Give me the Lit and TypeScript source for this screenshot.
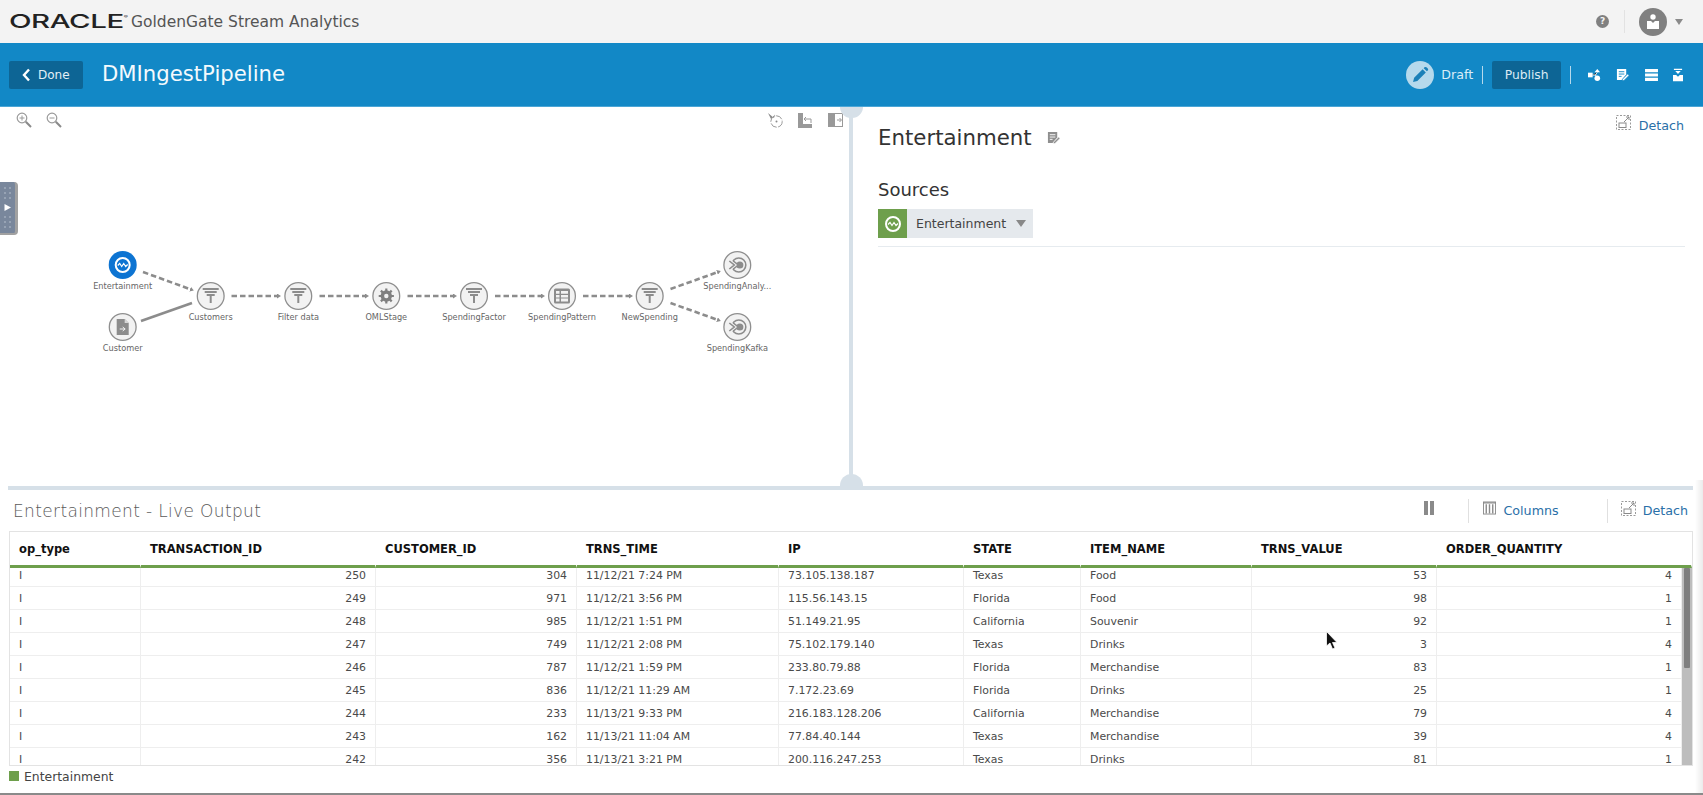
import { LitElement, html, css, svg } from "lit";
import { customElement } from "lit/decorators.js";

const COLS = ["op_type","TRANSACTION_ID","CUSTOMER_ID","TRNS_TIME","IP","STATE","ITEM_NAME","TRNS_VALUE","ORDER_QUANTITY"];
const NUMERIC = new Set([1,2,7,8]);
const ROWS = [
  ["I","250","304","11/12/21 7:24 PM","73.105.138.187","Texas","Food","53","4"],
  ["I","249","971","11/12/21 3:56 PM","115.56.143.15","Florida","Food","98","1"],
  ["I","248","985","11/12/21 1:51 PM","51.149.21.95","California","Souvenir","92","1"],
  ["I","247","749","11/12/21 2:08 PM","75.102.179.140","Texas","Drinks","3","4"],
  ["I","246","787","11/12/21 1:59 PM","233.80.79.88","Florida","Merchandise","83","1"],
  ["I","245","836","11/12/21 11:29 AM","7.172.23.69","Florida","Drinks","25","1"],
  ["I","244","233","11/13/21 9:33 PM","216.183.128.206","California","Merchandise","79","4"],
  ["I","243","162","11/13/21 11:04 AM","77.84.40.144","Texas","Merchandise","39","4"],
  ["I","242","356","11/13/21 3:21 PM","200.116.247.253","Texas","Drinks","81","1"],
];

const funnel = svg`<path d="M-8-7H8M-6-4H6M-4-1H4" stroke="#8c8c8c" stroke-width="1.8" fill="none"/><path d="M-1-1H1V7H-1Z" fill="#8c8c8c"/>`;
const gear = svg`<circle r="4.2" fill="none" stroke="#808080" stroke-width="3"/><path d="M0-7.6V7.6M-7.6 0H7.6M-5.4-5.4 5.4 5.4M-5.4 5.4 5.4-5.4" stroke="#808080" stroke-width="2.2"/><circle r="2.2" fill="#f2f2f2"/>`;
const grid = svg`<rect x="-8" y="-7.5" width="16" height="15" rx="1.5" fill="#8c8c8c"/><path d="M-6-5H-2.5V-2.2H-6ZM-1-5H6V-2.2H-1ZM-6-1H-2.5V1.4H-6ZM-1-1H6V1.4H-1ZM-6 2.6H-2.5V5.4H-6ZM-1 2.6H6V5.4H-1Z" fill="#f2f2f2"/>`;
const target = svg`<circle cx="1.5" r="7" fill="none" stroke="#8c8c8c" stroke-width="1.6"/><circle cx="2.5" r="3.6" fill="#8c8c8c"/><path d="M-8-4-3 0-8 4" fill="none" stroke="#f2f2f2" stroke-width="4"/><path d="M-8-4-3 0-8 4M-4-4 1 0-4 4" fill="none" stroke="#8c8c8c" stroke-width="1.6"/>`;
const file = svg`<path d="M-6-8H2L6-4V8H-6Z" fill="#8c8c8c"/><path d="M2-8V-4H6" fill="#d8d8d8"/><path d="M-3 2H2M0 0 2.5 2 0 4" stroke="#f2f2f2" stroke-width="1" fill="none"/>`;
const stream = svg`<circle r="7" fill="none" stroke="#fff" stroke-width="2"/><path d="M-5 .5-3-1.5-1 1.5 1-1.5 3 1.5 5-.5" fill="none" stroke="#fff" stroke-width="1.2"/>`;

interface GNode { x: number; y: number; label: string; icon: unknown; active?: boolean }
const NODES: GNode[] = [
  { x: 122.7, y: 265, label: "Entertainment", icon: stream, active: true },
  { x: 122.7, y: 327, label: "Customer", icon: file },
  { x: 210.7, y: 296, label: "Customers", icon: funnel },
  { x: 298.3, y: 296, label: "Filter data", icon: funnel },
  { x: 386.3, y: 296, label: "OMLStage", icon: gear },
  { x: 474, y: 296, label: "SpendingFactor", icon: funnel },
  { x: 562, y: 296, label: "SpendingPattern", icon: grid },
  { x: 649.7, y: 296, label: "NewSpending", icon: funnel },
  { x: 737.3, y: 265, label: "SpendingAnaly...", icon: target },
  { x: 737.3, y: 327, label: "SpendingKafka", icon: target },
];
const EDGES: [number, number, number, number, boolean][] = [
  [143, 272, 191, 289.5, true],
  [141, 321, 192, 303, false],
  [231.5, 296, 278, 296, true],
  [319.5, 296, 366, 296, true],
  [407.5, 296, 454, 296, true],
  [495, 296, 542, 296, true],
  [583, 296, 630, 296, true],
  [670.5, 289, 718, 272, true],
  [670.5, 303, 718, 320, true],
];

@customElement("app-root")
export class AppRoot extends LitElement {
  static styles = css`
    :host { display: block; width: 1703px; height: 795px; overflow: hidden; position: relative; background: #fff;
      font-family: "DejaVu Sans", sans-serif; color: #333; box-sizing: border-box; border-bottom: 2px solid #8a8a8a; }
    * { box-sizing: border-box; }
    svg { display: block; flex: none; }
    .top { height: 43px; background: #f3f3f3; display: flex; align-items: center; padding: 0 20px 0 9px; }
    .logo { width: 117px; height: 20px; display: flex; align-items: center; overflow: visible; }
    .logo span { font: 500 19px Inter, sans-serif; color: #222; transform: scaleX(1.55); transform-origin: left center; letter-spacing: -0.3px; }
    .logo sup { font-size: 4px; vertical-align: 10px; line-height: 0; }
    .product { margin-left: 5px; font-size: 15.5px; color: #555; }
    .spacer { flex: 1; }
    .help { width: 13px; height: 13px; border-radius: 50%; background: #808080; color: #f3f3f3; font: 700 9px/13px "DejaVu Sans", sans-serif; text-align: center; margin-right: 15px; }
    .vsep { width: 1px; height: 23px; background: #e2e2e2; margin-right: 14px; }
    .avatar { width: 28px; height: 28px; border-radius: 50%; background: #808080; display: flex; align-items: center; justify-content: center; margin-right: 8px; }
    .caret { width: 0; height: 0; border: 4px solid transparent; border-top: 6px solid #8a8a8a; border-bottom: 0; }

    .bar { height: 64px; background: #1288c6; border-bottom: 1px solid #4ba6d6; display: flex; align-items: center; padding: 0 20px 0 9px; color: #fff; }
    .done { width: 74px; height: 28px; border-radius: 2px; background: #0d6595; display: flex; align-items: center; gap: 7px; padding-left: 13px; font-size: 12px; color: #e4eff6; }
    .name { margin-left: 19px; font-size: 21.2px; color: #f4fafd; margin-bottom: 2px; }
    .pencil { width: 28px; height: 28px; border-radius: 50%; background: #b5d9ec; display: flex; align-items: center; justify-content: center; margin-right: 7px; }
    .draft { font-size: 12.6px; color: #d9edf7; margin-right: 9px; }
    .bsep { width: 1px; height: 18px; background: #b5d9ec; }
    .publish { width: 69px; height: 28px; border-radius: 2px; background: #0d6595; margin: 0 9px; display: flex; align-items: center; justify-content: center; font-size: 12.3px; color: #dcebf4; }
    .tools { display: flex; align-items: center; gap: 15.3px; margin-left: 17px; }

    .main { height: 379px; display: flex; }
    .canvas { width: 849px; position: relative; flex: none; }
    .canvas .graph { position: absolute; left: 0; top: -107px; }
    .zooms { position: absolute; left: 16px; top: 5px; display: flex; gap: 14px; }
    .ctools { position: absolute; left: 768px; top: 6px; display: flex; gap: 15px; }
    .tab { position: absolute; left: 0; top: 75px; width: 18px; height: 53px; background: #79879c; border-radius: 0 4px 4px 0; border-right: 3px solid #a1a1a1; border-bottom: 2px solid #a1a1a1; display: flex; align-items: center; justify-content: center; }
    .nlabel { position: absolute; width: 100px; margin-left: -50px; text-align: center; font-size: 8.2px; line-height: 10px; color: #666; white-space: nowrap; }
    .vsplit { width: 4px; background: #d6e0e8; flex: none; }
    .detail { flex: 1; padding: 17px 9px 0 25px; position: relative; min-width: 0; margin-right: 9px; }
    .dhead { display: flex; align-items: center; gap: 15px; }
    .dtitle { font-size: 21.3px; color: #333; line-height: 27px; }
    .sources { font-size: 18px; color: #333; margin-top: 28px; line-height: 22px; }
    .chipline { margin-top: 8px; padding-bottom: 8px; border-bottom: 1px solid #e6ebef; display: flex; }
    .chip { height: 29px; display: flex; align-items: center; background: #e5e9ed; width: 155px; }
    .chipicon { width: 29px; height: 29px; background: #6e9f4c; display: flex; align-items: center; justify-content: center; }
    .chiptext { font-size: 12.5px; color: #444; margin-left: 9px; }
    .chipcaret { width: 0; height: 0; border: 5.5px solid transparent; border-top: 7px solid #888; border-bottom: 0; margin-left: 10px; }
    .link { display: flex; align-items: center; gap: 8px; font-size: 12.7px; color: #2a6fa8; }
    .link svg { margin-bottom: 5px; }
    .ddetach { position: absolute; right: 10px; top: 8px; }

    .hsplit { height: 4px; margin: 0 10px 0 8px; background: #d6e0e8; }
    .knob { position: absolute; width: 23px; background: #d6e0e8; left: 840px; }
    .k1 { top: 107px; height: 11px; border-radius: 0 0 12px 12px; }
    .k2 { top: 474px; height: 12px; border-radius: 12px 12px 0 0; }

    .outhead { height: 41px; display: flex; align-items: center; padding: 0 15px 0 13px; }
    .outtitle { font-size: 17px; font-weight: 200; color: #5a5a5a; letter-spacing: .35px; padding-top: 1px; }
    .pause { display: flex; gap: 2px; margin: 0 34px 5px 0; }
    .pause i { width: 4px; height: 14px; background: #8a8a8a; display: block; }
    .osep { width: 1px; height: 24px; background: #e0e0e0; }
    .ocol { margin: 0 48px 0 14px; gap: 7px; }
    .odet { margin-left: 13px; gap: 7px; }

    .table { margin: 0 10px 0 9px; height: 235px; border: 1px solid #e3e3e3; position: relative; overflow: hidden; }
    .head, .rows { display: grid; }
    .head { grid-template-columns: 131px 235px 201px 202px 185px 117px 171px 185px 255px; }
    .rows { grid-template-columns: 131px 235px 201px 202px 185px 117px 171px 185px 245px; margin-top: -4px; }
    .body { height: 197px; overflow: hidden; }
    .th { height: 36px; padding: 0 9px; display: flex; align-items: center; font-size: 11.5px; font-weight: 700; color: #111; border-bottom: 3px solid #6e9f4c; border-right: 1px solid #fff; position: relative; z-index: 1; }
    .td { height: 23px; padding: 0 9px; display: flex; align-items: center; font-size: 10.9px; color: #4a4a4a; border-bottom: 1px solid #eee; border-right: 1px solid #eee; white-space: nowrap; }
    .num { justify-content: flex-end; }
    .track { position: absolute; right: 0; top: 36px; bottom: 0; width: 10px; background: #bdbdbd; }
    .thumb { position: absolute; right: 2px; top: 36px; width: 6px; height: 100px; background: #7f7f7f; border-radius: 1px; }
    .legend { height: 22px; padding: 0 0 2px 9px; display: flex; align-items: center; gap: 5px; font-size: 12.4px; color: #444; }
    .swatch { width: 10px; height: 10px; background: #6e9f4c; }
    .cursor { position: absolute; left: 1326px; top: 631px; }
    .edge { position: absolute; right: 0; top: 480px; bottom: 0; width: 8px; background: linear-gradient(to right, rgba(235,235,235,0), #ebebeb); pointer-events: none; }
  `;

  private detachIcon() {
    return html`<svg width="15" height="15" viewBox="0 0 15 15"><rect x=".5" y=".5" width="14" height="14" fill="none" stroke="#9a9a9a" stroke-dasharray="2 1.5"/><path d="M8 7 13 2M10 2H13V5" stroke="#8a8a8a" fill="none"/><rect x="3" y="8" width="7" height="4.5" fill="none" stroke="#8a8a8a"/></svg>`;
  }
  private editIcon(c: string, bg: string) {
    return html`<svg width="13" height="13" viewBox="0 0 14 14"><path d="M1 1H11V7L6 13H1Z" fill="${c}"/><path d="M3 4H9M3 6.5H9M3 9H6" stroke="${bg}" stroke-width="1"/><path d="M7 12 12.5 6.5 14 8 8.5 13.5H7Z" fill="${c}" stroke="${bg}" stroke-width=".6"/></svg>`;
  }

  private graph() {
    return html`<svg class="graph" width="849" height="487" viewBox="0 0 849 487">
      <defs><marker id="arr" markerWidth="4" markerHeight="5" refX="1" refY="2.5" orient="auto" markerUnits="userSpaceOnUse"><path d="M0 0 4 2.5 0 5Z" fill="#8c8c8c"/></marker></defs>
      ${EDGES.map(([a,b,c,d,dash]) => dash
        ? svg`<line x1=${a} y1=${b} x2=${c} y2=${d} stroke="#8c8c8c" stroke-width="2.6" stroke-dasharray="5.5 3" marker-end="url(#arr)"/>`
        : svg`<line x1=${a} y1=${b} x2=${c} y2=${d} stroke="#8c8c8c" stroke-width="2.6"/>`)}
      ${NODES.map(n => svg`<g transform="translate(${n.x} ${n.y})">
        <circle r=${n.active ? 14 : 13.4} fill=${n.active ? "#0d74d2" : "#f2f2f2"} stroke=${n.active ? "none" : "#8f8f8f"} stroke-width="1.3"/>
        ${n.icon}</g>`)}
    </svg>`;
  }

  render() {
    return html`
      <div class="top">
        <div class="logo"><span>ORACLE<sup>®</sup></span></div>
        <div class="product">GoldenGate Stream Analytics</div>
        <div class="spacer"></div>
        <div class="help">?</div>
        <div class="vsep"></div>
        <div class="avatar"><svg width="14" height="16" viewBox="0 0 14 16"><circle cx="7" cy="3" r="2.7" fill="#fff"/><path d="M1 7H5L7 9 9 7H13V15H1Z" fill="#fff"/></svg></div>
        <div class="caret"></div>
      </div>

      <div class="bar">
        <div class="done"><svg width="9" height="14" viewBox="0 0 9 14"><path d="M7 1.5 2 7 7 12.5" fill="none" stroke="#fff" stroke-width="2.4"/></svg>Done</div>
        <div class="name">DMIngestPipeline</div>
        <div class="spacer"></div>
        <div class="pencil"><svg width="17" height="17" viewBox="0 0 16 16"><path d="M1 15 2 11 10 3 13 6 5 14ZM11 2 12 1Q13 .5 14 1.5L15 2.5Q15.500 3.500 15 4L14 5Z" fill="#1a80b8"/></svg></div>
        <div class="draft">Draft</div>
        <div class="bsep"></div>
        <div class="publish">Publish</div>
        <div class="bsep"></div>
        <div class="tools">
          <svg width="13" height="14" viewBox="0 0 14 14"><rect x="0" y="4.5" width="5" height="5" fill="#fff"/><path d="M10 .5 13 4H7Z" fill="#fff"/><circle cx="10" cy="10.5" r="3" fill="#fff"/><path d="M5 7H8L10 4M8 7 10 10" stroke="#fff"/></svg>
          ${this.editIcon("#fff", "#1288c6")}
          <svg width="13" height="12" viewBox="0 0 14 13"><path d="M0 0H14V3.400H0ZM0 4.800H14V8.200H0ZM0 9.600H14V13H0Z" fill="#fff"/></svg>
          <svg width="10" height="14" viewBox="0 0 11 14"><path d="M1 0H10V1.500H1ZM2.500 2.500H8.500L5.500 6ZM0 7H3.500L5.500 9 7.500 7H11V14H0Z" fill="#fff"/></svg>
        </div>
      </div>

      <div class="main">
        <div class="canvas">
          ${this.graph()}
          <div class="zooms">
            <svg width="16" height="16" viewBox="0 0 16 16"><circle cx="6" cy="6" r="4.8" fill="none" stroke="#9a9a9a" stroke-width="1.2"/><path d="M3.500 6H8.500M6 3.500V8.500" stroke="#9a9a9a"/><path d="M9.800 9.800 15 15" stroke="#8a8a8a" stroke-width="2"/></svg>
            <svg width="16" height="16" viewBox="0 0 16 16"><circle cx="6" cy="6" r="4.8" fill="none" stroke="#9a9a9a" stroke-width="1.2"/><path d="M3.500 6H8.500" stroke="#9a9a9a"/><path d="M9.800 9.800 15 15" stroke="#8a8a8a" stroke-width="2"/></svg>
          </div>
          <div class="ctools">
            <svg width="15" height="15" viewBox="0 0 15 15"><circle cx="8.500" cy="8.500" r="5.700" fill="none" stroke="#9a9a9a" stroke-dasharray="7 1.500"/><circle cx="8.500" cy="8.500" r="1" fill="#8a8a8a"/><path d="M0 0 6 5 7 1.500 3 6Z" fill="#8a8a8a"/></svg>
            <svg width="15" height="15" viewBox="0 0 15 15"><path d="M0 0H5V11H14V15H0Z" fill="#999"/><path d="M8 4 6 6 8 8M6 6H13V10" fill="none" stroke="#999"/></svg>
            <svg width="15" height="14" viewBox="0 0 15 14"><rect x=".5" y=".5" width="14" height="13" fill="none" stroke="#999"/><rect x="1" y="1" width="6" height="12" fill="#999"/><path d="M9 7H13M11.500 5 13.500 7 11.500 9" fill="none" stroke="#999"/></svg>
          </div>
          <div class="tab"><svg width="9" height="45" viewBox="0 0 9 45">
            ${[3,8,13,32,37,42].map(y => svg`<rect x="1" y=${y-1} width="2" height="2" fill="#97a3b4"/><rect x="6" y=${y-1} width="2" height="2" fill="#97a3b4"/>`)}
            <path d="M1.500 19 8 22.500 1.500 26Z" fill="#fff"/></svg></div>
          ${NODES.map(n => html`<div class="nlabel" style="left:${n.x}px;top:${n.y - 107 + 16}px">${n.label}</div>`)}
        </div>
        <div class="vsplit"></div>
        <div class="detail">
          <div class="dhead"><div class="dtitle">Entertainment</div>${this.editIcon("#8f8f8f", "#fff")}</div>
          <div class="sources">Sources</div>
          <div class="chipline"><div class="chip">
            <div class="chipicon"><svg width="20" height="20" viewBox="-10 -10 20 20">${stream}</svg></div>
            <div class="chiptext">Entertainment</div><div class="chipcaret"></div>
          </div></div>
          <div class="link ddetach">${this.detachIcon()}<span>Detach</span></div>
        </div>
      </div>
      <div class="hsplit"></div>
      <div class="knob k1"></div>
      <div class="knob k2"></div>

      <div class="outhead">
        <div class="outtitle">Entertainment - Live Output</div>
        <div class="spacer"></div>
        <div class="pause"><i></i><i></i></div>
        <div class="osep"></div>
        <div class="link ocol"><svg width="13" height="14" viewBox="0 0 14 14"><rect x=".5" y=".5" width="13" height="13" fill="none" stroke="#8a8a8a"/><path d="M0 1.500H14M3.500 3V13M7 3V13M10.500 3V13" stroke="#8a8a8a" stroke-width="1.500" fill="none"/></svg><span>Columns</span></div>
        <div class="osep"></div>
        <div class="link odet">${this.detachIcon()}<span>Detach</span></div>
      </div>

      <div class="table">
        <div class="head">${COLS.map(c => html`<div class="th">${c}</div>`)}</div>
        <div class="body"><div class="rows">
          ${ROWS.map(r => r.map((v, i) => html`<div class="td ${NUMERIC.has(i) ? "num" : ""}">${v}</div>`))}
        </div></div>
        <div class="track"></div>
        <div class="thumb"></div>
      </div>
      <div class="legend"><div class="swatch"></div>Entertainment</div>

      <svg class="cursor" width="12" height="19" viewBox="0 0 12 19"><path d="M.5.5V15L4 12 6.500 18 9 17 6.500 11.500H11Z" fill="#111" stroke="#fff" stroke-width=".8"/></svg>
      <div class="edge"></div>
    `;
  }
}
